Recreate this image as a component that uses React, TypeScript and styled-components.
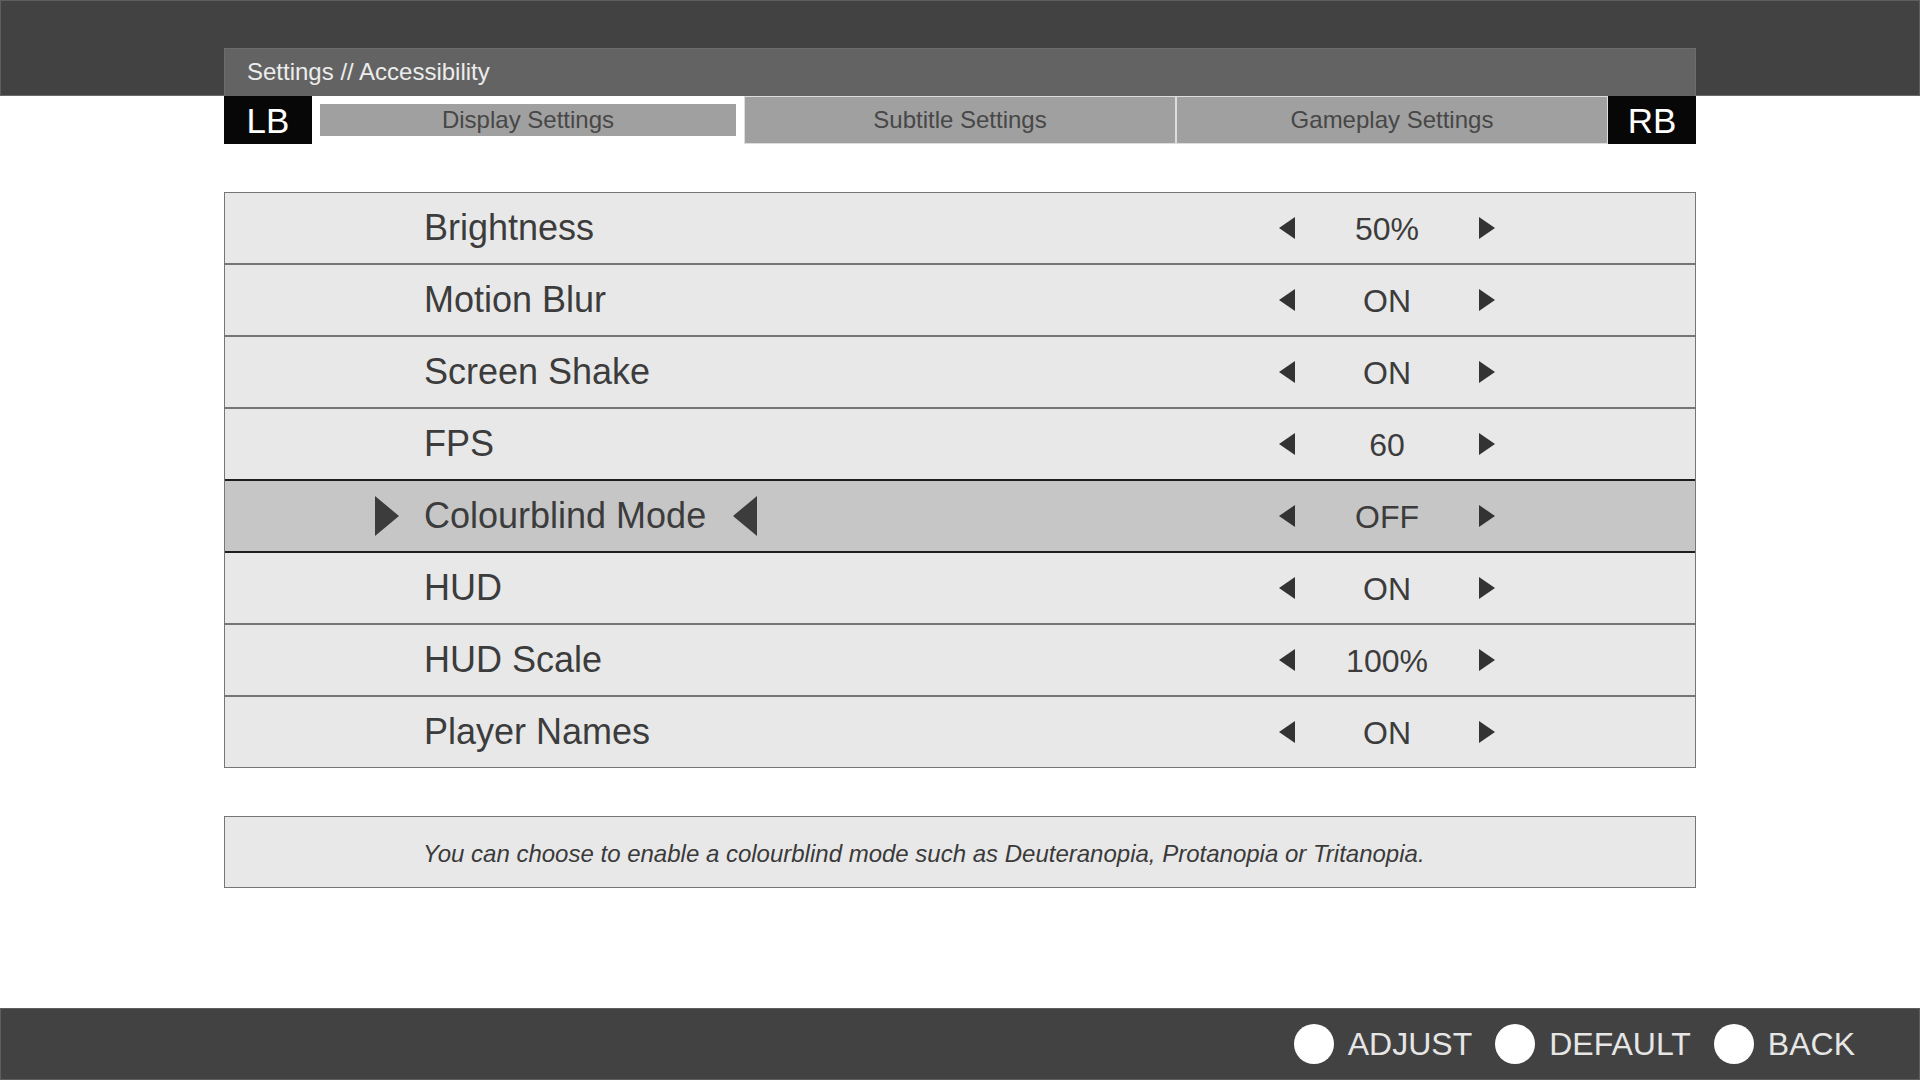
import React from 'react'
import styled, { createGlobalStyle, css } from 'styled-components'

/*
  Accessibility settings screen.
*/

const GlobalStyle = createGlobalStyle`
  html, body {
    margin: 0;
    padding: 0;
    background: #ffffff;
    font-family: "Liberation Sans", Arial, Helvetica, sans-serif;
  }
  * { box-sizing: border-box; }
`

type Setting = {
  label: string
  value: string
}

const settings: Setting[] = [
  { label: 'Brightness', value: '50%' },
  { label: 'Motion Blur', value: 'ON' },
  { label: 'Screen Shake', value: 'ON' },
  { label: 'FPS', value: '60' },
  { label: 'Colourblind Mode', value: 'OFF' },
  { label: 'HUD', value: 'ON' },
  { label: 'HUD Scale', value: '100%' },
  { label: 'Player Names', value: 'ON' },
]

const tabs = ['Display Settings', 'Subtitle Settings', 'Gameplay Settings']

const Page = styled.div`
  width: 1920px;
  height: 1080px;
  display: flex;
  flex-direction: column;
  overflow: hidden;
`

const Header = styled.header`
  height: 96px;
  background: #424242;
  border: 1px solid #5e5e5e;
  border-bottom-color: #6a6a6a;
  display: flex;
  align-items: flex-end;
  justify-content: center;
`

const Breadcrumb = styled.div`
  width: 1472px;
  height: 48px;
  margin-bottom: -1px;
  background: #636363;
  border: 1px solid #6c6c6c;
  border-bottom: none;
  display: flex;
  align-items: center;
  padding: 0 0 2px 22px;
  color: #ececec;
  font-size: 24px;
`

const Main = styled.main`
  flex: 1;
  width: 1472px;
  margin: 0 auto;
  display: flex;
  flex-direction: column;
`

const TabBar = styled.nav`
  height: 48px;
  display: flex;
`

const Bumper = styled.div`
  width: 88px;
  background: #070707;
  color: #ffffff;
  font-size: 35px;
  display: flex;
  align-items: center;
  justify-content: center;
  padding-top: 2px;
`

const TabSlot = styled.div<{ $active?: boolean }>`
  width: 432px;
  display: flex;
  ${({ $active }) =>
    $active
      ? css`
          padding: 8px;
        `
      : css`
          border: 1px solid #dddddd;
        `}
`

const Tab = styled.div`
  flex: 1;
  background: #a0a0a0;
  color: #474747;
  font-size: 24px;
  display: flex;
  align-items: center;
  justify-content: center;
`

const List = styled.ul`
  list-style: none;
  height: 576px;
  margin: 48px 0 0 0;
  padding: 0;
  border: 1px solid #767676;
  display: flex;
  flex-direction: column;
`

const Row = styled.li<{ $selected?: boolean; $afterSelected?: boolean }>`
  flex: 1;
  display: flex;
  align-items: center;
  padding: 0 200px 0 199px;
  background: ${({ $selected }) => ($selected ? '#c6c6c6' : '#e8e8e8')};
  border-top: 2px solid
    ${({ $selected, $afterSelected }) => ($selected || $afterSelected ? '#1e1e1e' : '#767676')};
  color: #3c3c3c;

  &:first-child {
    border-top: none;
  }
`

const LabelCell = styled.div`
  flex: 1;
  display: flex;
  align-items: center;
  font-size: 36px;
`

const Marker = styled.svg<{ $side: 'left' | 'right' }>`
  width: 24px;
  height: 40px;
  flex: none;
  ${({ $side }) =>
    $side === 'left'
      ? css`
          margin-left: -49px;
          margin-right: 25px;
        `
      : css`
          margin-left: 27px;
        `}
`

const Control = styled.div`
  display: flex;
  align-items: center;
`

const StepArrow = styled.svg`
  width: 16px;
  height: 22px;
  flex: none;
`

const Value = styled.span`
  width: 184px;
  text-align: center;
  font-size: 32px;
  padding-top: 2px;
`

const Description = styled.div`
  margin-top: 48px;
  height: 72px;
  background: #e8e8e8;
  border: 1px solid #767676;
  display: flex;
  align-items: center;
  padding: 4px 0 0 198px;
  font-size: 24px;
  font-style: italic;
  color: #3a3a3a;
`

const Footer = styled.footer`
  height: 72px;
  background: #424242;
  border: 1px solid #5e5e5e;
  display: flex;
  align-items: center;
  justify-content: flex-end;
  padding-right: 64px;
  gap: 23px;
`

const Hint = styled.div`
  display: flex;
  align-items: center;
  gap: 14px;
  color: #e6e6e6;
  font-size: 32px;
`

const ButtonDot = styled.span`
  width: 40px;
  height: 40px;
  border-radius: 50%;
  background: #ffffff;
`

const Triangle = ({ dir }: { dir: 'left' | 'right' }) =>
  dir === 'left' ? <polygon points="16,0 16,22 0,11" /> : <polygon points="0,0 0,22 16,11" />

const App: React.FC = (): JSX.Element => {
  const selected = 4
  return (
    <Page>
      <GlobalStyle />
      <Header>
        <Breadcrumb>Settings // Accessibility</Breadcrumb>
      </Header>
      <Main>
        <TabBar>
          <Bumper>LB</Bumper>
          {tabs.map((tab, index) => (
            <TabSlot key={tab} $active={index === 0}>
              <Tab>{tab}</Tab>
            </TabSlot>
          ))}
          <Bumper>RB</Bumper>
        </TabBar>

        <List>
          {settings.map((item, index) => {
            const isSelected = index === selected
            return (
              <Row key={item.label} $selected={isSelected} $afterSelected={index === selected + 1}>
                <LabelCell>
                  {isSelected && (
                    <Marker $side="left" viewBox="0 0 24 40">
                      <polygon points="0,0 24,20 0,40" fill="#3c3c3c" />
                    </Marker>
                  )}
                  {item.label}
                  {isSelected && (
                    <Marker $side="right" viewBox="0 0 24 40">
                      <polygon points="24,0 0,20 24,40" fill="#3c3c3c" />
                    </Marker>
                  )}
                </LabelCell>
                <Control>
                  <StepArrow viewBox="0 0 16 22" fill="#333333">
                    <Triangle dir="left" />
                  </StepArrow>
                  <Value>{item.value}</Value>
                  <StepArrow viewBox="0 0 16 22" fill="#333333">
                    <Triangle dir="right" />
                  </StepArrow>
                </Control>
              </Row>
            )
          })}
        </List>

        <Description>
          You can choose to enable a colourblind mode such as Deuteranopia, Protanopia or Tritanopia.
        </Description>
      </Main>
      <Footer>
        {['ADJUST', 'DEFAULT', 'BACK'].map((label) => (
          <Hint key={label}>
            <ButtonDot />
            {label}
          </Hint>
        ))}
      </Footer>
    </Page>
  )
}

export default App
